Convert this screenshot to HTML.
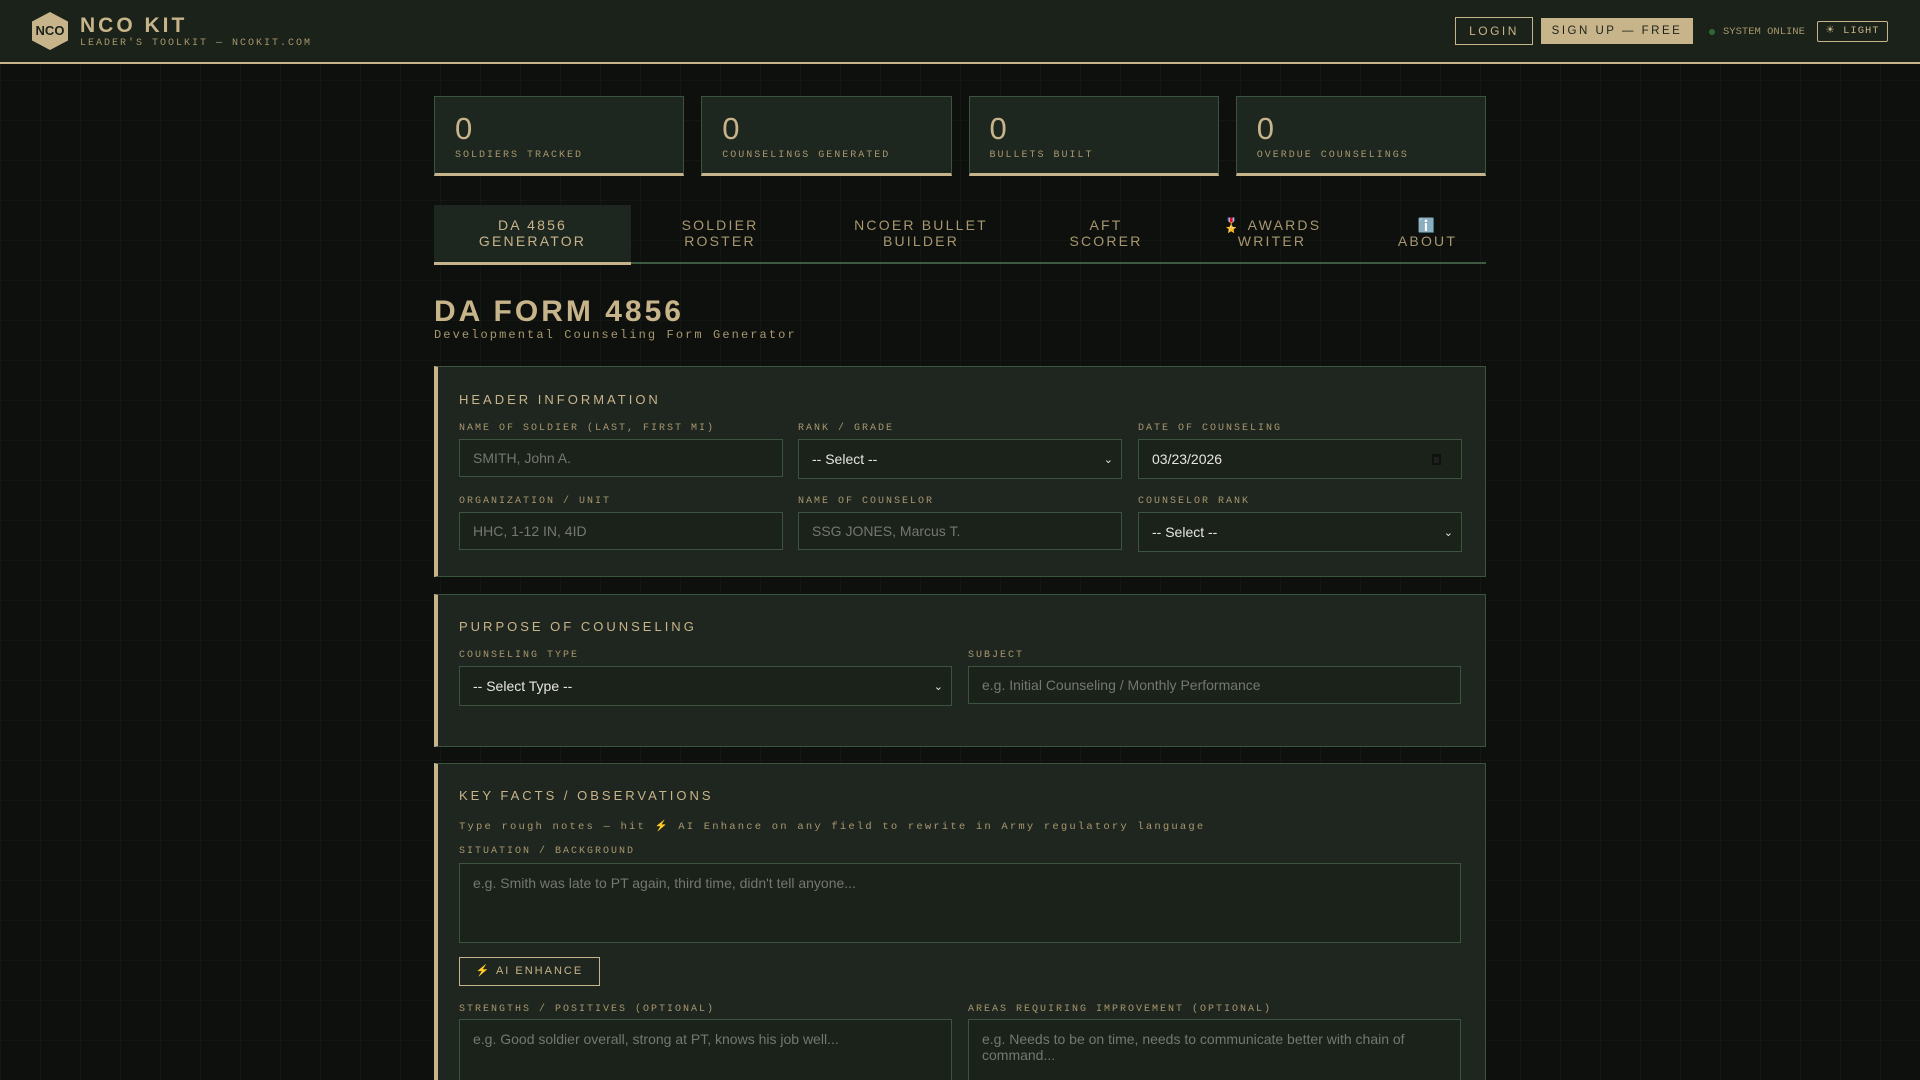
<!DOCTYPE html>
<html><head><meta charset="utf-8">
<style>
*{box-sizing:border-box;margin:0;padding:0}
html,body{width:1920px;height:1080px;overflow:hidden}
body{background-color:#0d100d;background-image:linear-gradient(rgba(255,255,255,0.025) 1px,transparent 1px),linear-gradient(90deg,rgba(255,255,255,0.025) 1px,transparent 1px);background-size:40px 40px;font-family:"Liberation Sans",sans-serif;color:#c8b48a;position:relative}
.mono{font-family:"Liberation Mono",monospace}
header{position:absolute;left:0;top:0;width:1920px;height:64px;background:#1b2219;border-bottom:2px solid #c8b48a}
.hex{position:absolute;left:32px;top:12px;width:36px;height:38px;background:#c8b48a;clip-path:polygon(50% 0,100% 25%,100% 75%,50% 100%,0 75%,0 25%);color:#1b2219;font-weight:bold;font-size:13px;line-height:38px;text-align:center}
.brand{position:absolute;left:80px;top:14px;font-size:21px;font-weight:bold;letter-spacing:3px}
.sub{position:absolute;left:80px;top:38px;font-size:10px;letter-spacing:2px;color:#a8976f}
.btn{position:absolute;font-size:12px;letter-spacing:2.5px;text-align:center}
.stats{position:absolute;left:434px;top:96px;width:1052px;display:flex;gap:17px}
.card{width:251px;height:80px;background:#1e271f;border:1px solid #3a5440;border-bottom:3px solid #c8b48a;position:relative}
.card .n{position:absolute;left:20px;top:14px;font-size:31px;color:#c8b48a}
.card .l{position:absolute;left:20px;top:53px;font-size:10px;letter-spacing:2px;color:#a8976f}
.tabs{position:absolute;left:434px;top:205px;width:1052px;height:59px;border-bottom:2px solid #3f5a42}
.tab{position:absolute;top:0;height:57px;text-align:center;font-size:14px;letter-spacing:2.2px;line-height:16px;padding-top:12px;color:#a8976f}
.tab.act{background:#1e271f;color:#c8b48a;border-bottom:3px solid #c8b48a;height:60px}
h1{position:absolute;left:434px;top:295px;font-size:30px;letter-spacing:3px;font-weight:bold}
.h1s{position:absolute;left:434px;top:328px;font-size:12px;letter-spacing:2.1px;color:#a8976f}
.panel{position:absolute;left:434px;width:1052px;background:#1e261f;border:1px solid #3a5440;border-left:4px solid #c8b48a}
.ph{position:absolute;left:21px;font-size:13px;letter-spacing:3px}
.lb{position:absolute;font-size:10px;letter-spacing:2px;color:#a8976f}
.in{position:absolute;background:#1b2219;border:1px solid #3a5440;font-size:14px;color:#74786f;padding-left:13px;display:flex;align-items:center}
.in.sel{color:#e6e6e0;justify-content:space-between;padding-right:8px}
.in.ta{align-items:flex-start;padding-top:11px}
</style></head><body>
<header>
<div class="hex">NCO</div>
<div class="brand">NCO KIT</div>
<div class="sub mono">LEADER'S TOOLKIT — NCOKIT.COM</div>
<div class="btn" style="left:1455px;top:17px;width:78px;height:28px;border:1px solid #c8b48a;line-height:26px">LOGIN</div>
<div class="btn" style="left:1541px;top:18px;width:152px;height:26px;background:#c8b48a;color:#1b2219;line-height:26px;font-size:11.5px">SIGN UP — FREE</div>
<div style="position:absolute;left:1709px;top:29px;width:6px;height:6px;border-radius:50%;background:#2f6a35"></div>
<div class="mono" style="position:absolute;left:1723px;top:26px;font-size:10.5px;color:#a8976f">SYSTEM ONLINE</div>
<div class="mono" style="position:absolute;left:1817px;top:21px;width:71px;height:21px;border:1px solid #c8b48a;border-radius:2px;font-size:10.5px;line-height:19px;text-align:center;letter-spacing:1px">☀ LIGHT</div>
</header>

<div class="stats">
<div class="card"><div class="n">0</div><div class="l mono">SOLDIERS TRACKED</div></div>
<div class="card"><div class="n">0</div><div class="l mono">COUNSELINGS GENERATED</div></div>
<div class="card"><div class="n">0</div><div class="l mono">BULLETS BUILT</div></div>
<div class="card"><div class="n">0</div><div class="l mono">OVERDUE COUNSELINGS</div></div>
</div>

<div class="tabs">
<div class="tab act" style="left:0;width:197px">DA 4856<br>GENERATOR</div>
<div class="tab" style="left:197px;width:178px">SOLDIER<br>ROSTER</div>
<div class="tab" style="left:375px;width:224px">NCOER BULLET<br>BUILDER</div>
<div class="tab" style="left:599px;width:146px">AFT<br>SCORER</div>
<div class="tab" style="left:745px;width:186px">🎖️ AWARDS<br>WRITER</div>
<div class="tab" style="left:933px;width:121px">ℹ️<br>ABOUT</div>
</div>

<h1>DA FORM 4856</h1>
<div class="h1s mono">Developmental Counseling Form Generator</div>

<div class="panel" style="top:366px;height:211px">
<div class="ph" style="top:25px">HEADER INFORMATION</div>
<div class="lb mono" style="left:21px;top:56px">NAME OF SOLDIER (LAST, FIRST MI)</div>
<div class="lb mono" style="left:360px;top:56px">RANK / GRADE</div>
<div class="lb mono" style="left:700px;top:56px">DATE OF COUNSELING</div>
<div class="in" style="left:21px;top:72px;width:324px;height:38px">SMITH, John A.</div>
<div class="in sel" style="left:360px;top:72px;width:324px;height:40px">-- Select --<span style="font-size:11px">⌄</span></div>
<div class="in sel" style="left:700px;top:72px;width:324px;height:40px">03/23/2026<span style="display:inline-block;width:9px;height:11px;border:2px solid #111;border-top-width:3px;margin-right:12px"></span></div>
<div class="lb mono" style="left:21px;top:129px">ORGANIZATION / UNIT</div>
<div class="lb mono" style="left:360px;top:129px">NAME OF COUNSELOR</div>
<div class="lb mono" style="left:700px;top:129px">COUNSELOR RANK</div>
<div class="in" style="left:21px;top:145px;width:324px;height:38px">HHC, 1-12 IN, 4ID</div>
<div class="in" style="left:360px;top:145px;width:324px;height:38px">SSG JONES, Marcus T.</div>
<div class="in sel" style="left:700px;top:145px;width:324px;height:40px">-- Select --<span style="font-size:11px">⌄</span></div>
</div>

<div class="panel" style="top:594px;height:153px">
<div class="ph" style="top:24px">PURPOSE OF COUNSELING</div>
<div class="lb mono" style="left:21px;top:55px">COUNSELING TYPE</div>
<div class="lb mono" style="left:530px;top:55px">SUBJECT</div>
<div class="in sel" style="left:21px;top:71px;width:493px;height:40px">-- Select Type --<span style="font-size:11px">⌄</span></div>
<div class="in" style="left:530px;top:71px;width:493px;height:38px">e.g. Initial Counseling / Monthly Performance</div>
</div>

<div class="panel" style="top:763px;height:340px">
<div class="ph" style="top:24px">KEY FACTS / OBSERVATIONS</div>
<div class="lb mono" style="left:21px;top:55px;font-size:10.5px;letter-spacing:2.2px">Type rough notes — hit ⚡ AI Enhance on any field to rewrite in Army regulatory language</div>
<div class="lb mono" style="left:21px;top:82px">SITUATION / BACKGROUND</div>
<div class="in ta" style="left:21px;top:99px;width:1002px;height:80px">e.g. Smith was late to PT again, third time, didn't tell anyone...</div>
<div style="position:absolute;left:21px;top:193px;width:141px;height:29px;border:1px solid #c8b48a;font-size:11px;letter-spacing:2px;line-height:27px;text-align:center"><span style="color:#e8b830">⚡</span> AI ENHANCE</div>
<div class="lb mono" style="left:21px;top:240px">STRENGTHS / POSITIVES (OPTIONAL)</div>
<div class="lb mono" style="left:530px;top:240px">AREAS REQUIRING IMPROVEMENT (OPTIONAL)</div>
<div class="in ta" style="left:21px;top:255px;width:493px;height:80px">e.g. Good soldier overall, strong at PT, knows his job well...</div>
<div class="in ta" style="left:530px;top:255px;width:493px;height:80px;padding-right:20px;line-height:16px">e.g. Needs to be on time, needs to communicate better with chain of command...</div>
</div>
</body></html>
